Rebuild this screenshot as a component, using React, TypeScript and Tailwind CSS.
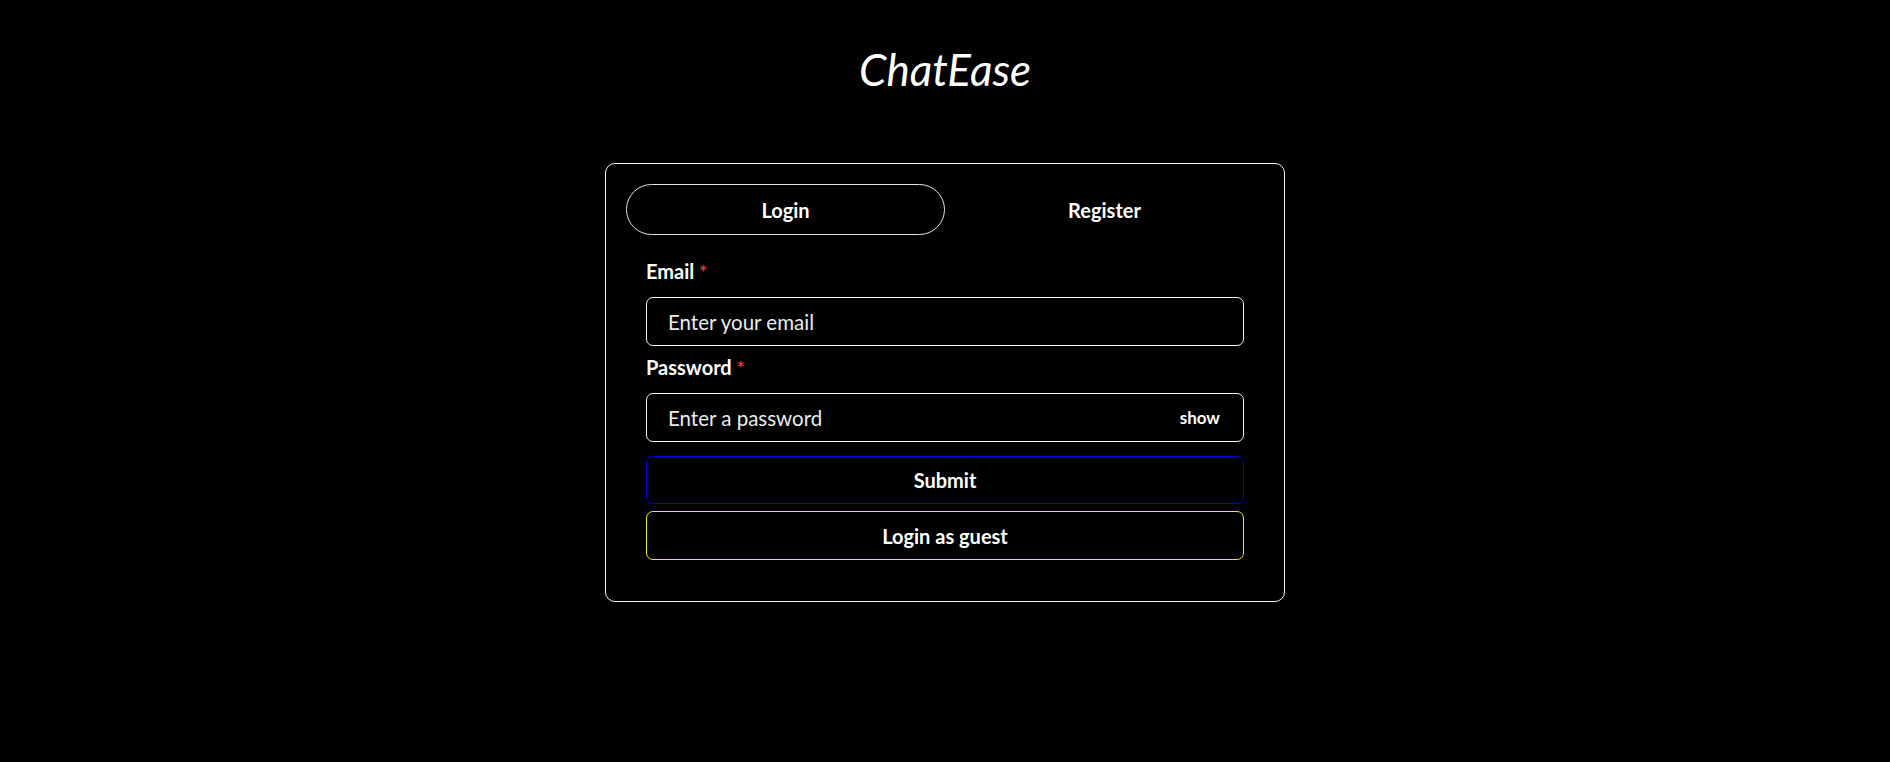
import { useState } from "react";

const Field = ({
  label,
  children
}: {
  label: string;
  children: React.ReactNode;
}) => (
  <div className="flex flex-col">
    <label className="mb-[11px] text-[20px] leading-[29px] font-bold text-white">
      {label} <span className="font-semibold text-[#e53e3e]">*</span>
    </label>
    {children}
  </div>
);

export default function App() {
  const [tab, setTab] = useState<"login" | "register">("login");
  const [showPass, setShowPass] = useState(false);

  return (
    <div className="flex min-h-[762px] w-full flex-col items-center bg-black font-['Lato',sans-serif] text-white">
      <h1 className="mt-[43px] font-['Comic_Sans_MS','Lato',sans-serif] text-[44px] leading-[53px] font-normal italic text-white">
        ChatEase
      </h1>

      <div className="mt-[67px] flex w-[680px] flex-col rounded-[10px] border border-[#f2f2f2] p-[20px]">
        <div className="flex">
          <button
            onClick={() => setTab("login")}
            className={`h-[51px] flex-1 rounded-full text-[20px] font-bold text-white ${
              tab === "login" ? "border border-[#e2e2e2]" : "border border-transparent"
            }`}
          >
            Login
          </button>
          <button
            onClick={() => setTab("register")}
            className={`h-[51px] flex-1 rounded-full text-[20px] font-bold text-white ${
              tab === "register" ? "border border-[#e2e2e2]" : "border border-transparent"
            }`}
          >
            Register
          </button>
        </div>

        <div className="mt-[22px] flex flex-col px-[20px] pb-[21px]">
          <Field label="Email">
            <input
              type="email"
              placeholder="Enter your email"
              className="h-[49px] rounded-[7px] border border-[#f5f5f5] bg-black px-[21px] text-[20.5px] text-white outline-none placeholder:text-[#ececec]"
            />
          </Field>

          <div className="mt-[7px]">
            <Field label="Password">
              <div className="flex h-[49px] items-center rounded-[7px] border border-[#f5f5f5] bg-black">
                <input
                  type={showPass ? "text" : "password"}
                  placeholder="Enter a password"
                  className="h-full min-w-0 flex-1 bg-transparent pl-[21px] text-[20.5px] text-white outline-none placeholder:text-[#ececec]"
                />
                <button
                  onClick={() => setShowPass(!showPass)}
                  className="mr-[23px] text-[17px] font-bold text-white"
                >
                  {showPass ? "hide" : "show"}
                </button>
              </div>
            </Field>
          </div>

          <button className="mt-[14px] h-[48px] rounded-[7px] border border-[#0000e6] text-[20px] font-bold text-white">
            Submit
          </button>
          <button className="mt-[7px] h-[49px] rounded-[7px] border border-[#f5ec00] text-[20px] font-bold text-white">
            Login as guest
          </button>
        </div>
      </div>
    </div>
  );
}
